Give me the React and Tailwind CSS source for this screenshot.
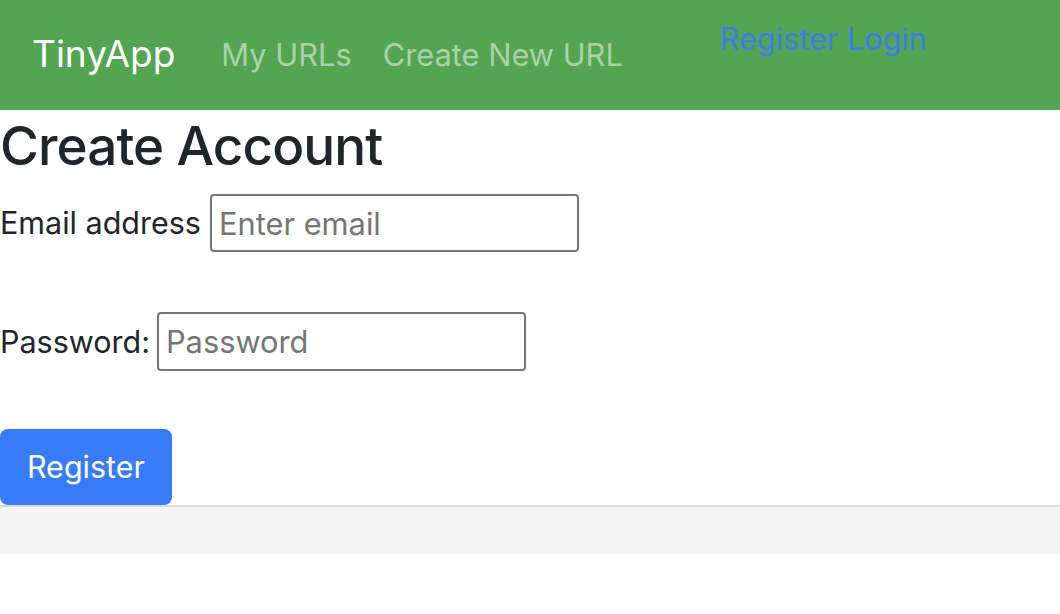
export default function App() {
  // Navbar links
  const links = ["My URLs", "Create New URL"];

  return (
    <div className="min-h-screen bg-white font-['Inter','Noto_Sans',sans-serif] text-[#212529]">
      {/* Header */}
      <nav className="h-[110px] bg-[#53a551] flex items-start">
        <a className="ml-[32px] mt-[32px] text-[37px] leading-[44px] text-white">TinyApp</a>
        <div className="ml-[46px] mt-[36px] flex gap-[31px] text-[30.8px] leading-[38px] text-[#a9d2a8]">
          {links.map((l) => (
            <a key={l}>{l}</a>
          ))}
        </div>
        <div className="ml-[97px] mt-[20px] text-[30.6px] leading-[38px] text-[#3b7cf0]">
          <a>Register</a> <a>Login</a>
        </div>
      </nav>

      {/* Form */}
      <main>
        <h1 className="text-[53px] leading-[68px] font-medium tracking-[-0.9px] mt-[2px]">Create Account</h1>
        <form className="text-[30.5px] leading-[44px]">
          <div className="mt-[14px] flex items-center gap-[9px]">
            <label>Email address</label>
            <input
              placeholder="Enter email"
              className="w-[369px] h-[58px] border-2 border-[#767676] rounded-[4px] px-[7px] text-[30.8px] placeholder:text-[#757575] outline-none"
            />
          </div>
          <div className="mt-[60px] flex items-center gap-[7px]">
            <label>Password:</label>
            <input
              type="password"
              placeholder="Password"
              className="w-[369px] h-[59px] border-2 border-[#767676] rounded-[4px] px-[7px] text-[30.8px] placeholder:text-[#757575] outline-none"
            />
          </div>
          <button
            type="button"
            className="mt-[58px] w-[172px] h-[76px] rounded-[8px] bg-[#377cf6] text-white text-[30.5px]"
          >
            Register
          </button>
        </form>
      </main>

      {/* Footer */}
      <footer className="h-[49px] bg-[#f5f5f5] border-t-2 border-[#dadada]"></footer>
    </div>
  );
}
